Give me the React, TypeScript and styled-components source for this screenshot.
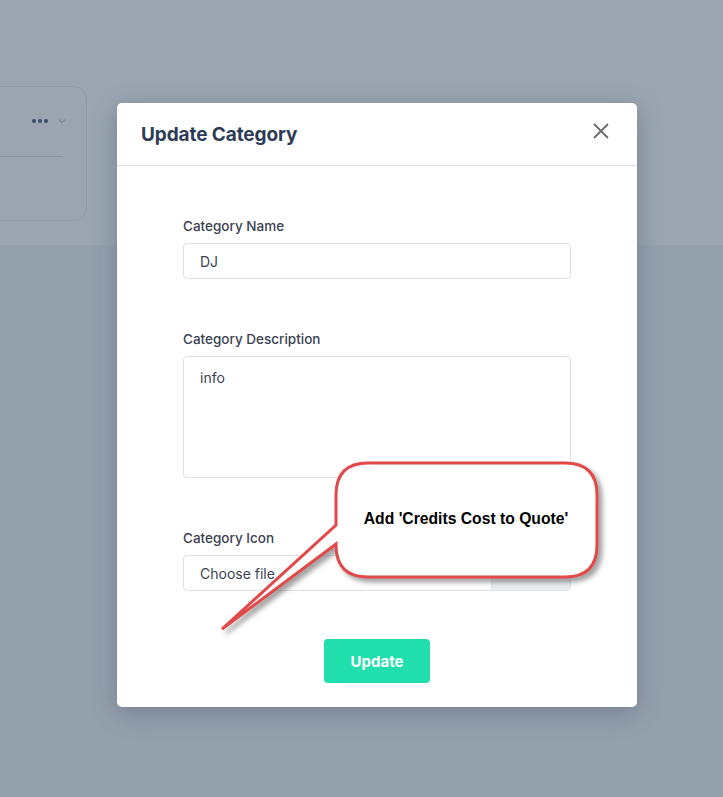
import React from "react";
import styled, { createGlobalStyle } from "styled-components";

const Global = createGlobalStyle`
  html, body { margin: 0; padding: 0; }
  body { font-family: Inter, "Noto Sans", sans-serif; }
  * { box-sizing: border-box; }
`;

const Page = styled.div`
  position: relative;
  width: 723px;
  height: 797px;
  overflow: hidden;
  background: #95a0ad;
`;

const TopBand = styled.div`
  height: 245px;
  background: #9aa5b1;
  padding-top: 86px;
`;

const BgCard = styled.div`
  width: 108px;
  height: 135px;
  margin-left: -21px;
  border: 1px solid #8d9aab;
  border-radius: 13px;
  padding: 26px 20px 0 0;
  display: flex;
  flex-direction: column;
  align-items: flex-end;
`;

const CardTools = styled.div`
  display: flex;
  align-items: center;
  gap: 10px;
  height: 16px;
`;

const Dots = styled.div`
  display: flex;
  gap: 2px;
  span {
    width: 4px;
    height: 4px;
    border-radius: 50%;
    background: #3e4d69;
  }
`;

const CardRule = styled.div`
  align-self: stretch;
  margin: 27px 4px 0 0;
  border-top: 1px solid #8390a1;
`;

const Modal = styled.div`
  position: absolute;
  left: 117px;
  top: 103px;
  width: 520px;
  height: 604px;
  background: #fff;
  border-radius: 5px;
  box-shadow: 0 6px 24px rgba(60, 70, 90, 0.35);
  display: flex;
  flex-direction: column;
`;

const Header = styled.div`
  height: 63px;
  border-bottom: 1px solid #dfe1e8;
  display: flex;
  align-items: center;
  justify-content: space-between;
  padding: 0 27px 0 24px;
`;

const Title = styled.h2`
  margin: 0;
  font-size: 19px;
  font-weight: 700;
  color: #2e3b56;
  letter-spacing: -0.1px;
`;

const Close = styled.button`
  border: 0;
  background: none;
  padding: 0;
  margin-bottom: 6px;
  width: 18px;
  height: 18px;
  display: flex;
  cursor: pointer;
`;

const Body = styled.div`
  flex: 1;
  padding: 52px 66px 24px 66px;
  display: flex;
  flex-direction: column;
`;

const Group = styled.div<{ $gap: number }>`
  display: flex;
  flex-direction: column;
  margin-bottom: ${(p) => p.$gap}px;
`;

const Label = styled.label`
  font-size: 13.5px;
  font-weight: 500;
  color: #3a4253;
  line-height: 17px;
  margin-bottom: 8px;
`;

const Field = styled.div<{ $h: number }>`
  height: ${(p) => p.$h}px;
  border: 1px solid #dde0ea;
  border-radius: 4px;
  padding: 0 16px;
  font-size: 14px;
  color: #3a4253;
  display: flex;
  align-items: center;
`;

const Area = styled(Field)`
  align-items: flex-start;
  padding-top: 12px;
`;

const FileField = styled.div`
  height: 36px;
  border: 1px solid #dde0ea;
  border-radius: 4px;
  font-size: 14px;
  color: #3a4253;
  display: flex;
  overflow: hidden;
`;

const FileName = styled.div`
  flex: 1;
  display: flex;
  align-items: center;
  padding-left: 16px;
`;

const Browse = styled.div`
  width: 79px;
  background: #e9ecf1;
  border-left: 1px solid #dde0ea;
`;

const Actions = styled.div`
  display: flex;
  justify-content: center;
`;

const Button = styled.button`
  width: 106px;
  height: 44px;
  border: 0;
  border-radius: 4px;
  background: #20dfac;
  color: #fff;
  font-family: Inter, sans-serif;
  font-size: 15px;
  font-weight: 700;
`;

const Callout = styled.svg`
  position: absolute;
  left: 0;
  top: 0;
  pointer-events: none;
`;

export default function App() {
  return (
    <>
      <Global />
      <Page>
        <TopBand>
          <BgCard>
            <CardTools>
              <Dots>
                <span />
                <span />
                <span />
              </Dots>
              <svg width="8" height="6" viewBox="0 0 8 6">
                <path d="M1 1.5 L4 4.5 L7 1.5" fill="none" stroke="#7c889a" strokeWidth="1.5" />
              </svg>
            </CardTools>
            <CardRule />
          </BgCard>
        </TopBand>

        <Modal>
          <Header>
            <Title>Update Category</Title>
            <Close aria-label="close">
              <svg width="18" height="18" viewBox="0 0 18 18">
                <path d="M2 2 L16 16 M16 2 L2 16" stroke="#6c6c6c" strokeWidth="1.8" fill="none" />
              </svg>
            </Close>
          </Header>
          <Body>
            <Group $gap={52}>
              <Label>Category Name</Label>
              <Field $h={36}>DJ</Field>
            </Group>
            <Group $gap={52}>
              <Label>Category Description</Label>
              <Area $h={122}>info</Area>
            </Group>
            <Group $gap={48}>
              <Label>Category Icon</Label>
              <FileField>
                <FileName>Choose file</FileName>
                <Browse />
              </FileField>
            </Group>
            <Actions>
              <Button>Update</Button>
            </Actions>
          </Body>
        </Modal>

        <Callout width="723" height="797" viewBox="0 0 723 797">
          <defs>
            <filter id="sh" x="-10%" y="-10%" width="130%" height="140%">
              <feDropShadow dx="4" dy="4" stdDeviation="2.5" floodColor="#555" floodOpacity="0.55" />
            </filter>
          </defs>
          <path
            d="M368 463 H565 Q597 463 597 495 V545 Q597 577 565 577 H368 Q336 577 336 545 V544 L222 629 L336 525 V495 Q336 463 368 463 Z"
            fill="#fff"
            stroke="#e2484a"
            strokeWidth="3"
            strokeLinejoin="miter"
            filter="url(#sh)"
          />
          <text
            x="466"
            y="524"
            textAnchor="middle"
            fontFamily="'Liberation Sans', Arial, sans-serif"
            fontWeight="700"
            fontSize="15.7"
            fill="#000"
          >
            Add 'Credits Cost to Quote'
          </text>
        </Callout>
      </Page>
    </>
  );
}
